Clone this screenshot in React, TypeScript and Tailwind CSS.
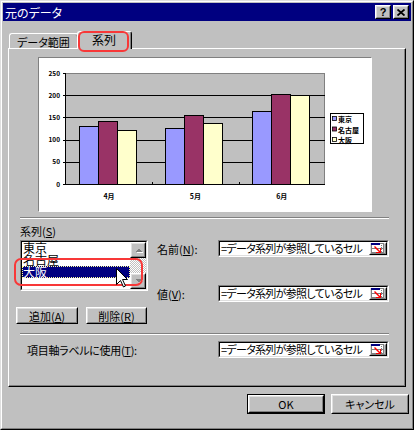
import React from "react";

const FONT = "font-['Noto_Sans_CJK_JP','Noto_Sans',sans-serif] [font-feature-settings:'palt']";

function Raised({ className, children }: { className: string; children?: React.ReactNode }) {
  return (
    <div className={`${className} border border-t-white border-l-white border-r-black border-b-black`}>
      <div className="w-full h-full border border-t-[#dfdfdf] border-l-[#dfdfdf] border-r-[#808080] border-b-[#808080] bg-[#c0c0c0] flex items-center justify-center">
        {children}
      </div>
    </div>
  );
}

function Sunken({ className, children }: { className: string; children?: React.ReactNode }) {
  return (
    <div className={`${className} border border-t-[#808080] border-l-[#808080] border-r-white border-b-white`}>
      <div className="w-full h-full border border-t-black border-l-black border-r-[#dfdfdf] border-b-[#dfdfdf] bg-white flex overflow-hidden">
        {children}
      </div>
    </div>
  );
}

function RefIcon() {
  return (
    <svg width="14" height="11" viewBox="0 0 14 11" shapeRendering="crispEdges">
      <rect x="0.5" y="0.5" width="12" height="9" fill="#ffffff" stroke="#808080" />
      <rect x="0" y="0" width="9" height="2" fill="#000080" />
      <line x1="0" y1="5.5" x2="13" y2="5.5" stroke="#808080" />
      <line x1="10.5" y1="2" x2="10.5" y2="10" stroke="#808080" strokeDasharray="1 1" />
      <polygon points="4,3 9,8 9,5 10,5 10,10 5,10 5,9 8,9 3,4" fill="#ff0000" shapeRendering="auto" />
    </svg>
  );
}

function RefField({ className }: { className: string }) {
  return (
    <Sunken className={className}>
      <div className="flex-1 overflow-hidden whitespace-nowrap pl-[1px] leading-[13px] text-[11px] tracking-[-0.7px]">
        =データ系列が参照しているセル
      </div>
      <Raised className="w-[18px] h-full shrink-0">
        <RefIcon />
      </Raised>
    </Sunken>
  );
}

function Arrow({ up }: { up: boolean }) {
  return (
    <svg width="9" height="6" viewBox="0 0 9 6" shapeRendering="crispEdges">
      {up ? (
        <>
          <polygon points="1,5 8,5 4.5,1.5" fill="#ffffff" transform="translate(1,1)" />
          <polygon points="1,5 8,5 4.5,1.5" fill="#808080" />
        </>
      ) : (
        <>
          <polygon points="1,1 8,1 4.5,4.5" fill="#ffffff" transform="translate(1,1)" />
          <polygon points="1,1 8,1 4.5,4.5" fill="#808080" />
        </>
      )}
    </svg>
  );
}

function Chart() {
  const vals = [
    [130, 141, 121],
    [127, 155, 138],
    [164, 202, 200],
  ];
  const colors = ["#9999ff", "#993366", "#ffffcc"];
  const yOf = (v: number) => 126 - v * 0.444;
  const months = ["4月", "5月", "6月"];
  const ticks = [0, 50, 100, 150, 200, 250];
  const legend = ["東京", "名古屋", "大阪"];
  return (
    <svg width="331" height="153" viewBox="0 0 331 153" className="block">
      <rect x="27" y="15" width="259" height="111" fill="#c0c0c0" />
      <line x1="27" y1="15.5" x2="286" y2="15.5" stroke="#808080" shapeRendering="crispEdges" />
      <line x1="285.5" y1="15" x2="285.5" y2="126" stroke="#808080" shapeRendering="crispEdges" />
      {[50, 100, 150, 200].map((v) => (
        <line key={v} x1="27" y1={Math.round(yOf(v)) + 0.5} x2="286" y2={Math.round(yOf(v)) + 0.5} stroke="#000" shapeRendering="crispEdges" />
      ))}
      {ticks.map((v) => (
        <line key={"t" + v} x1="24" y1={Math.round(yOf(v)) + 0.5} x2="27" y2={Math.round(yOf(v)) + 0.5} stroke="#000" shapeRendering="crispEdges" />
      ))}
      {vals.map((g, i) =>
        g.map((v, j) => {
          const x = 40 + Math.round(86.4 * i) + 19 * j;
          const y = Math.round(yOf(v));
          return (
            <rect key={i + "-" + j} x={x + 0.5} y={y + 0.5} width={19} height={126 - y} fill={colors[j]} stroke="#000" strokeWidth="1.2" shapeRendering="crispEdges" />
          );
        })
      )}
      <line x1="26.5" y1="15" x2="26.5" y2="127" stroke="#000" strokeWidth="1.3" shapeRendering="crispEdges" />
      <line x1="26" y1="126.5" x2="286" y2="126.5" stroke="#000" strokeWidth="1.3" shapeRendering="crispEdges" />
      {[113, 200].map((x) => (
        <line key={"x" + x} x1={x + 0.5} y1="124" x2={x + 0.5} y2="126" stroke="#000" shapeRendering="crispEdges" />
      ))}
      {ticks.map((v) => (
        <text key={"l" + v} x="21" y={yOf(v) + 2.5} textAnchor="end" fontSize="6.5" fontWeight="bold" fontFamily="'Noto Sans CJK JP', sans-serif" fill="#000">
          {v}
        </text>
      ))}
      {months.map((m, i) => (
        <text key={m} x={70 + 86.4 * i} y="141" textAnchor="middle" fontSize="7" fontWeight="bold" fontFamily="'Noto Sans CJK JP', sans-serif" fill="#000">
          {m}
        </text>
      ))}
      <rect x="291.5" y="55.5" width="33" height="30" fill="#fff" stroke="#000" shapeRendering="crispEdges" />
      {legend.map((l, i) => (
        <g key={l}>
          <rect x="293.5" y={58.5 + i * 10.5} width="4" height="4" fill={colors[i]} stroke="#000" strokeWidth="0.8" />
          <text x="299" y={64 + i * 10.5} fontSize="7" fontWeight="bold" fontFamily="'Noto Sans CJK JP', sans-serif" fill="#000">
            {l}
          </text>
        </g>
      ))}
    </svg>
  );
}

export default function App() {
  return (
    <div className={`relative w-[414px] h-[430px] text-[11px] leading-[12px] text-black ${FONT}`}>
      <div className="w-full h-full bg-[#c0c0c0] border border-t-[#dfdfdf] border-l-[#dfdfdf] border-r-black border-b-black">
        <div className="w-full h-full border border-t-white border-l-white border-r-[#808080] border-b-[#808080] p-px flex flex-col">
          {/* title bar */}
          <div className="h-[18px] bg-[#000080] flex items-start justify-between pr-[2px]">
            <div className="pl-[2px] pt-[3px] text-white text-[12px] leading-[13px]">元のデータ</div>
            <div className="flex gap-[2px] mt-[2px]">
              <Raised className="w-[16px] h-[14px]">
                <span className="font-['Liberation_Sans',sans-serif] font-bold text-[11px] leading-[11px]">?</span>
              </Raised>
              <Raised className="w-[16px] h-[14px]">
                <svg width="8" height="7" viewBox="0 0 8 7">
                  <path d="M0.5 0.5 L7.5 6.5 M7.5 0.5 L0.5 6.5" stroke="#000" strokeWidth="1.8" />
                </svg>
              </Raised>
            </div>
          </div>

          {/* body */}
          <div className="flex-1 px-[5px] flex flex-col">
            {/* tabs */}
            <div className="flex items-start h-[17px] mt-[10px]">
              <div className="ml-[1px] mt-[2px] w-[70px] h-[15px] border-l border-t border-r border-l-white border-t-white border-r-black rounded-t-[3px] flex items-center justify-center pt-[1px]">
                <div className="w-full h-full border-r border-r-[#808080] flex items-center justify-center rounded-t-[3px]">
                  データ範囲
                </div>
              </div>
              <div className="relative z-10 -ml-[2px] w-[55px] h-[18px] bg-[#c0c0c0] border-l border-t border-r border-l-white border-t-white border-r-black rounded-t-[3px]">
                <div className="w-full h-full border-r border-r-[#808080] flex items-center justify-center pb-[1px] text-[12px]">
                  系列
                </div>
              </div>
            </div>

            {/* panel */}
            <div className="h-[339px] border border-t-white border-l-white border-r-black border-b-black">
              <div className="w-full h-full border-r border-b border-r-[#808080] border-b-[#808080] flex flex-col">
                <div className="ml-[29px] mt-[8px] w-[334px] h-[155px] border border-t-[#808080] border-l-[#808080] border-r-white border-b-white bg-white">
                  <Chart />
                </div>
                <div className="ml-[11px] mt-[5px] w-[369px] border-t border-b border-t-[#808080] border-b-white" />
                <div className="ml-[11px] mt-[6px] h-[12px] leading-[12px]">
                  系列(<span className="underline">S</span>)
                </div>
                <div className="flex items-start mt-[3px]">
                  <div className="ml-[7px] w-[132px] flex flex-col">
                    <div className="ml-[4px] w-[128px] h-[51px] border border-t-[#808080] border-l-[#808080] border-r-white border-b-white">
                      <div className="w-full h-full border border-t-black border-l-black border-r-[#dfdfdf] border-b-[#dfdfdf] bg-white flex text-[12px]">
                        <div className="flex-1 flex flex-col">
                          <div className="h-[12px] leading-[12px] pl-[1px]">東京</div>
                          <div className="h-[12px] leading-[12px] pl-[1px]">名古屋</div>
                          <div className="h-[12px] leading-[12px] pl-[1px] bg-[#000080] text-white border border-dotted border-[#ffff99]">
                            <span className="-ml-px -mt-px block">大阪</span>
                          </div>
                        </div>
                        <div className="w-[16px] flex flex-col">
                          <Raised className="w-[16px] h-[16px]">
                            <Arrow up />
                          </Raised>
                          <div className="h-[15px] bg-[repeating-conic-gradient(#c0c0c0_0%_25%,#ffffff_0%_50%)] bg-[length:2px_2px]" />
                          <Raised className="w-[16px] h-[16px]">
                            <Arrow up={false} />
                          </Raised>
                        </div>
                      </div>
                    </div>
                    <div className="flex gap-[8px] mt-[16px]">
                      <Raised className="w-[62px] h-[17px]">
                        追加(<span className="underline">A</span>)
                      </Raised>
                      <Raised className="w-[61px] h-[17px]">
                        削除(<span className="underline">R</span>)
                      </Raised>
                    </div>
                  </div>
                  <div className="ml-[9px] flex flex-col">
                    <div className="flex items-center h-[17px]">
                      <div className="w-[61px]">
                        名前(<span className="underline">N</span>):
                      </div>
                      <RefField className="w-[171px] h-[17px]" />
                    </div>
                    <div className="flex items-center h-[17px] mt-[28px]">
                      <div className="w-[61px]">
                        値(<span className="underline">V</span>):
                      </div>
                      <RefField className="w-[171px] h-[17px]" />
                    </div>
                  </div>
                </div>
                <div className="ml-[11px] mt-[9px] w-[369px] border-t border-b border-t-[#808080] border-b-white" />
                <div className="flex items-center mt-[6px] h-[17px]">
                  <div className="ml-[18px] w-[191px] tracking-[-0.3px]">
                    項目軸ラベルに使用(<span className="underline">T</span>):
                  </div>
                  <RefField className="w-[171px] h-[17px]" />
                </div>
              </div>
            </div>

            {/* dialog buttons */}
            <div className="flex justify-end gap-[6px] mt-[7px] -mr-[3px]">
              <div className="w-[78px] h-[20px] border border-black">
                <Raised className="w-full h-full">OK</Raised>
              </div>
              <Raised className="w-[78px] h-[20px]">キャンセル</Raised>
            </div>
          </div>
        </div>
      </div>

      {/* annotation overlays */}
      <div className="absolute left-[78px] top-[31px] w-[51px] h-[21px] border-2 border-[#f83838] rounded-[6px] pointer-events-none z-20" />
      <div className="absolute left-[14px] top-[258px] w-[129px] h-[28px] border-2 border-[#f83838] rounded-[7px] pointer-events-none z-20" />
      <svg className="absolute left-[116px] top-[268px] z-30 pointer-events-none" width="13" height="20" viewBox="0 0 13 20">
        <polygon points="0.5,0.5 0.5,16.5 4.5,12.5 7.5,19 9.5,18 6.5,11.5 11.5,11.5" fill="#ffffff" stroke="#000000" strokeWidth="1" />
      </svg>
    </div>
  );
}
